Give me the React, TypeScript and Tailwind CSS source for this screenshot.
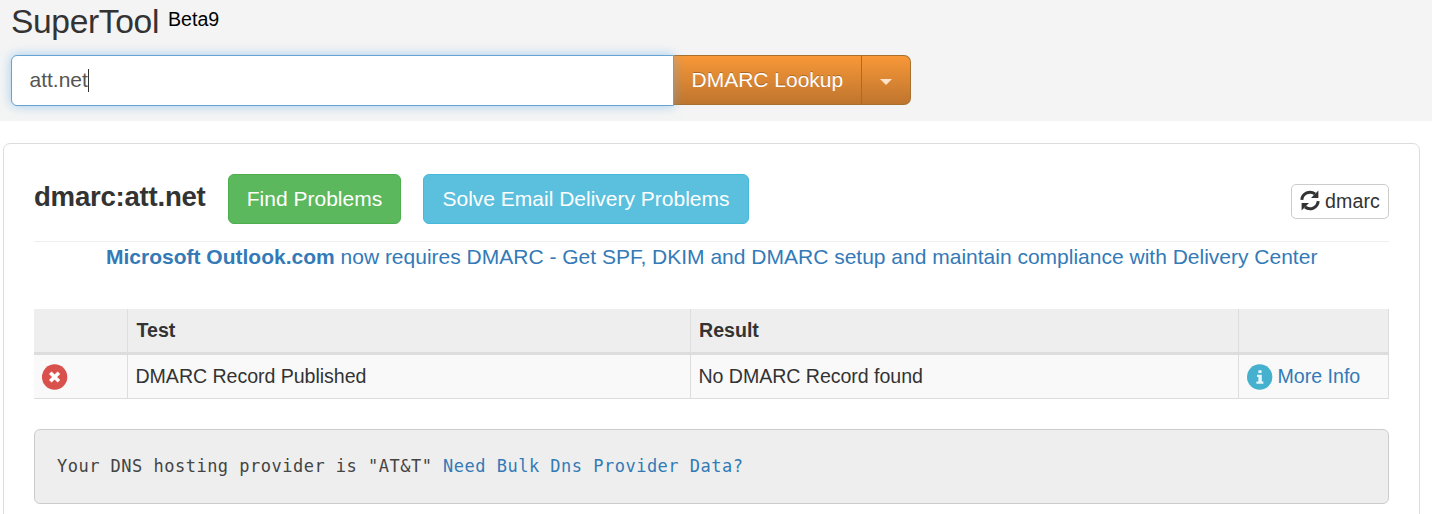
import React from "react";

function RefreshIcon() {
  return (
    <svg className="-mt-[2px] h-[21px] w-5 shrink-0" viewBox="0 0 20 21" fill="none">
      <path d="M1.8 9.8A8.2 8.2 0 0 1 15 4" stroke="#333" strokeWidth="3" />
      <path d="M18.2 11.2A8.2 8.2 0 0 1 5 17" stroke="#333" strokeWidth="3" />
      <path d="M18.4 0.6V8H11Z" fill="#333" />
      <path d="M1.6 20.4V13H9Z" fill="#333" />
    </svg>
  );
}

function ErrorIcon() {
  return (
    <svg className="block h-[26px] w-[26px]" viewBox="0 0 26 26" fill="none">
      <circle cx="12.6" cy="13" r="12.7" fill="#d9514c" />
      <path d="M8.3 8.7L16.9 17.3M16.9 8.7L8.3 17.3" stroke="#fff" strokeWidth="3.7" />
    </svg>
  );
}

function InfoIcon() {
  return (
    <svg className="block h-[26px] w-[26px] shrink-0" viewBox="0 0 26 26">
      <circle cx="12.7" cy="13" r="12.7" fill="#46b0cf" />
      <path d="M11.4 6.2H14.6V9H11.4ZM10 10.8H14.8V17.6H16.4V19.8H9.4V17.6H11.4V13H10Z" fill="#e8f6fa" />
    </svg>
  );
}

export default function App() {
  return (
    <div className="h-[514px] w-[1432px] overflow-hidden bg-white font-['Liberation_Sans',Arial,sans-serif] text-[19.6px] text-[#333]">
      <header className="h-[121px] bg-[#f4f4f4] pl-[11px]">
        <div className="flex h-[55px] items-start whitespace-nowrap">
          <h1 className="w-[148px] pt-[3px] text-[33.6px] leading-[38px] tracking-[-0.35px]">SuperTool</h1>
          <span className="pt-[8px] pl-[9px] text-[19.6px] leading-[22px] text-black">Beta9</span>
        </div>
        <div className="flex items-start">
          <div className="relative z-10 flex h-[51px] w-[663px] items-center rounded-l-[6px] border border-[#66a3d2] bg-white pb-px pl-[17.5px] text-[21px] text-[#555] shadow-[0_0_11px_rgba(102,175,233,0.6)]">
            <span className="whitespace-nowrap">att.net</span>
            <span className="h-[23px] w-px bg-[#333]" />
          </div>
          <div className="flex h-[50px] w-[237px] overflow-hidden rounded-r-[7px] border border-l-0 border-[#a8702f] bg-linear-to-b from-[#f89838] to-[#bf752e] text-white">
            <div className="flex w-[188px] items-center border-r border-[#a96a2b] pl-[17.5px] text-[21px] whitespace-nowrap [text-shadow:0_-1px_0_rgba(0,0,0,0.25)]">
              DMARC Lookup
            </div>
            <div className="flex flex-1 items-center justify-center pt-[3px]">
              <svg className="h-[6px] w-[12px]" viewBox="0 0 12 6">
                <path d="M0 0H12L6 6Z" fill="#fde3c8" />
              </svg>
            </div>
          </div>
        </div>
      </header>

      <main className="mt-[22px] ml-[3px] h-[400px] w-[1417px] rounded-[7px] border border-[#ddd] px-[30px] pt-[30px]">
        <div className="flex h-[68px] items-start border-b border-[#eee] whitespace-nowrap">
          <h2 className="w-[194px] pt-[7px] text-[27.6px] leading-[32px] font-bold tracking-[-0.25px]">dmarc:att.net</h2>
          <button className="flex h-[50px] w-[173px] items-center justify-center rounded-[6px] border border-[#4cae4c] bg-[#5cb85c] text-[21px] text-white">
            Find Problems
          </button>
          <button className="ml-[22px] flex h-[50px] w-[326px] items-center justify-center rounded-[6px] border border-[#46b8da] bg-[#5bc0de] text-[21px] text-white">
            Solve Email Delivery Problems
          </button>
          <button className="mt-[10px] ml-auto flex h-[35px] w-[98px] items-center gap-[5px] rounded-[5px] border border-[#ccc] pl-[8px]">
            <RefreshIcon />
            <span className="tracking-[0.1px]">dmarc</span>
          </button>
        </div>

        <p className="h-[67px] pl-[72px] text-[21px] leading-[30px] whitespace-nowrap text-[#337ab7]">
          <strong>Microsoft Outlook.com</strong>
          <span> now requires DMARC - Get SPF, DKIM and DMARC setup and maintain compliance with Delivery Center</span>
        </p>

        <div className="border-b border-[#ddd] whitespace-nowrap">
          <div className="grid h-[46px] grid-cols-[94px_563px_548px_150px] border-b-3 border-[#ddd] bg-[#eee] leading-[42px] font-bold">
            <div className="border-r border-[#ddd]" />
            <div className="border-r border-[#ddd] pl-[8.5px]">Test</div>
            <div className="border-r border-[#ddd] pl-[8px]">Result</div>
            <div className="border-r border-[#ddd]" />
          </div>
          <div className="grid h-[43px] grid-cols-[94px_563px_548px_150px] bg-[#f9f9f9] leading-[42px]">
            <div className="border-r border-[#ddd] pt-[9px] pl-[8px]">
              <ErrorIcon />
            </div>
            <div className="border-r border-[#ddd] pl-[7.5px] tracking-[-0.05px]">DMARC Record Published</div>
            <div className="border-r border-[#ddd] pl-[7.5px] tracking-[-0.05px]">No DMARC Record found</div>
            <div className="flex border-r border-[#ddd] pl-[8px] text-[#337ab7]">
              <span className="pt-[9px] pr-[4.5px]">
                <InfoIcon />
              </span>
              <span>More Info</span>
            </div>
          </div>
        </div>

        <div className="mt-[30px] h-[75px] rounded-[6px] border border-[#ccc] bg-[#eee] pt-[21px] pl-[22px] font-['DejaVu_Sans_Mono',monospace] text-[17px] leading-[30px] tracking-[0.49px] whitespace-nowrap text-[#444]">
          Your DNS hosting provider is "AT&amp;T" <span className="text-[#337ab7]">Need Bulk Dns Provider Data?</span>
        </div>
      </main>
    </div>
  );
}
